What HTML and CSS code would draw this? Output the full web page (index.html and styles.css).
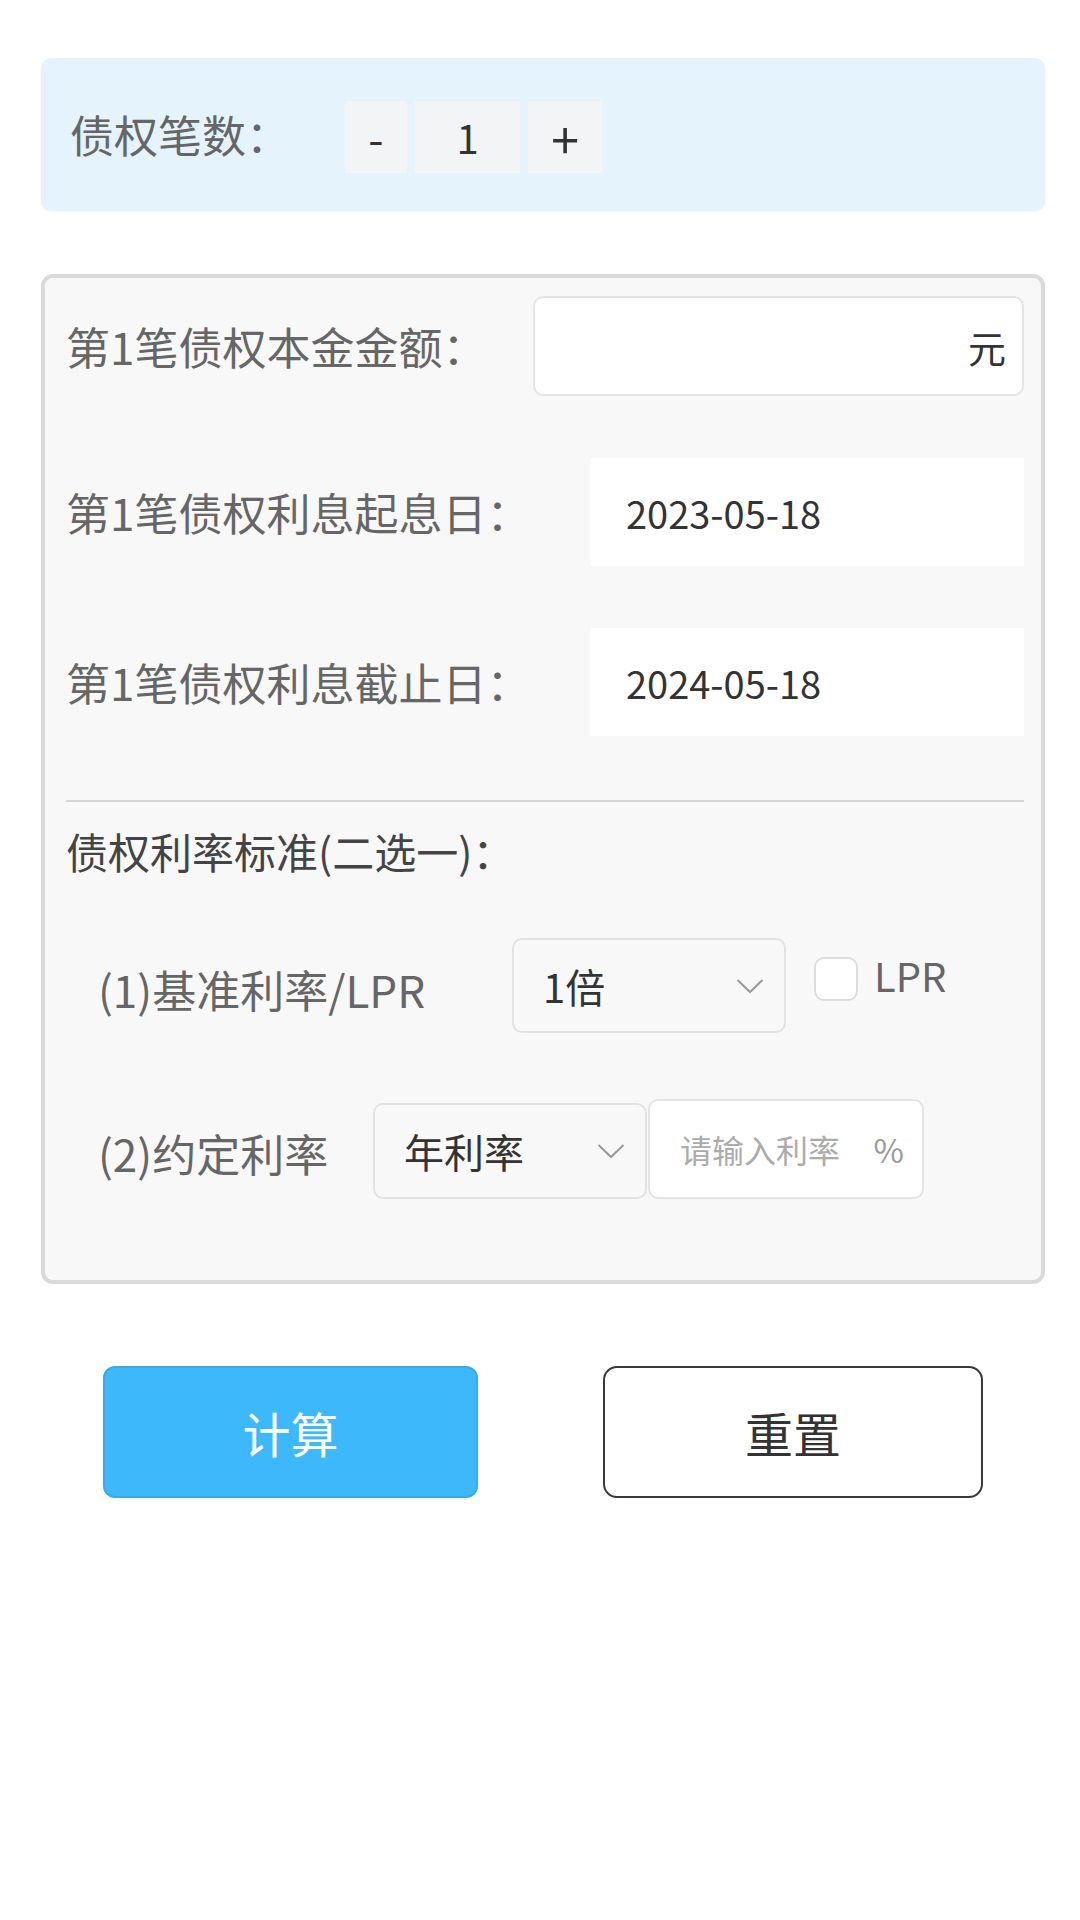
FILE: index.html
```html
<!DOCTYPE html>
<html lang="zh-CN">
<head>
<meta charset="utf-8">
<title>债权利息计算</title>
<link rel="stylesheet" href="styles.css">
</head>
<body>
<div class="page">
  <section class="count-card">
    <span class="count-label">债权笔数：</span>
    <div class="stepper">
      <span class="step-btn step-minus">-</span>
      <span class="step-value">1</span>
      <span class="step-btn step-plus">+</span>
    </div>
  </section>

  <section class="form-card">
    <div class="row row-amount">
      <span class="label">第1笔债权本金金额：</span>
      <div class="amount-box"><span class="unit">元</span></div>
    </div>
    <div class="row row-date">
      <span class="label">第1笔债权利息起息日：</span>
      <div class="date-box">2023-05-18</div>
    </div>
    <div class="row row-date">
      <span class="label">第1笔债权利息截止日：</span>
      <div class="date-box">2024-05-18</div>
    </div>

    <div class="divider"></div>

    <div class="heading">债权利率标准(二选一)：</div>

    <div class="rate-row rate-row-1">
      <span class="rate-label">(1)基准利率/LPR</span>
      <div class="select select-multi">
        <span class="select-text">1倍</span>
        <svg class="chevron" width="28" height="16" viewBox="0 0 28 16"><polyline points="1.5,2 14,14 26.5,2" fill="none" stroke="#9a9a9a" stroke-width="2"/></svg>
      </div>
      <span class="checkbox"></span>
      <span class="check-text">LPR</span>
    </div>

    <div class="rate-row rate-row-2">
      <span class="rate-label">(2)约定利率</span>
      <div class="select select-year">
        <span class="select-text">年利率</span>
        <svg class="chevron" width="28" height="16" viewBox="0 0 28 16"><polyline points="1.5,2 14,14 26.5,2" fill="none" stroke="#9a9a9a" stroke-width="2"/></svg>
      </div>
      <div class="rate-input">
        <span class="placeholder">请输入利率</span>
        <span class="percent">%</span>
      </div>
    </div>
  </section>

  <div class="actions">
    <button class="btn btn-primary">计算</button>
    <button class="btn btn-outline">重置</button>
  </div>
</div>
</body>
</html>
```

FILE: styles.css
```css
* { box-sizing: border-box; }

html, body {
  margin: 0;
  padding: 0;
  background: #ffffff;
}

body {
  width: 1080px;
  height: 1920px;
  font-family: "Noto Sans CJK SC", "Noto Sans", sans-serif;
  color: #333333;
}

.page {
  padding: 58px 35px 0 41px;
}

/* ---------- count card ---------- */
.count-card {
  height: 153px;
  background: #e5f3fd;
  border-radius: 10px;
  box-shadow: 0 1px 3px rgba(0, 0, 0, 0.04);
  display: flex;
  align-items: center;
  padding-left: 29px;
}

.count-label {
  width: 275px;
  font-size: 44px;
  line-height: 1.2;
  color: #666666;
}

.stepper {
  display: flex;
  gap: 8px;
  margin-top: 4px;
}

.step-btn,
.step-value {
  height: 72px;
  background: #f3f4f5;
  display: flex;
  align-items: center;
  justify-content: center;
  color: #333333;
}

.step-minus { width: 62px; font-size: 44px; }
.step-value { width: 105px; font-size: 40px; }
.step-plus  { width: 74px; font-size: 50px; }

/* ---------- form card ---------- */
.form-card {
  margin-top: 63px;
  background: #f8f8f8;
  border: 4px solid #dadada;
  border-radius: 12px;
  padding: 18px 17px 81px 21px;
}

.row {
  display: flex;
  align-items: center;
  justify-content: space-between;
}

.label {
  font-size: 44px;
  line-height: 1.2;
  color: #666666;
}

.amount-box {
  width: 491px;
  height: 100px;
  background: #ffffff;
  border: 2px solid #e4e4e4;
  border-radius: 10px;
  display: flex;
  align-items: center;
  justify-content: flex-end;
  padding-right: 16px;
}

.unit {
  font-size: 38px;
  color: #333333;
}

.row-date {
  margin-top: 62px;
}

.date-box {
  width: 434px;
  height: 108px;
  background: #ffffff;
  display: flex;
  align-items: center;
  padding-left: 36px;
  font-size: 38px;
  color: #333333;
}

.divider {
  margin-top: 64px;
  height: 2px;
  background: #d6d6d6;
}

.heading {
  margin-top: 24px;
  font-size: 42px;
  line-height: 1.2;
  color: #444444;
}

.rate-row {
  display: flex;
  align-items: center;
  padding-left: 32px;
}

.rate-row-1 { margin-top: 62px; }
.rate-row-2 { margin-top: 66px; }

.rate-label {
  font-size: 44px;
  line-height: 1.2;
  color: #666666;
  margin-top: 8px;
}

.rate-row-1 .rate-label { width: 414px; }
.rate-row-2 .rate-label { width: 275px; }

.select {
  width: 274px;
  height: 95px;
  background: #f8f8f8;
  border: 2px solid #e2e2e2;
  border-radius: 10px;
  display: flex;
  align-items: center;
  justify-content: space-between;
  padding: 0 20px 0 29px;
}

.select-text {
  font-size: 40px;
  color: #333333;
}

.chevron {
  display: block;
}

.checkbox {
  align-self: flex-start;
  margin-top: 19px;
  margin-left: 28px;
  width: 44px;
  height: 44px;
  background: #ffffff;
  border: 2px solid #dddddd;
  border-radius: 10px;
}

.check-text {
  align-self: flex-start;
  margin-top: 13px;
  margin-left: 16px;
  font-size: 40px;
  line-height: 1.2;
  color: #666666;
}

.rate-row-2 .select {
  height: 96px;
  margin-top: 4px;
}

.rate-input {
  width: 276px;
  height: 100px;
  margin-left: 1px;
  background: #ffffff;
  border: 2px solid #e4e4e4;
  border-radius: 10px;
  display: flex;
  align-items: center;
  justify-content: space-between;
  padding: 0 18px 0 30px;
}

.placeholder {
  font-size: 32px;
  color: #ababab;
}

.percent {
  font-size: 33px;
  color: #9a9a9a;
}

/* ---------- actions ---------- */
.actions {
  display: flex;
  margin-top: 82px;
  padding-left: 62px;
  gap: 125px;
}

.btn {
  height: 132px;
  border-radius: 12px;
  font-family: "Noto Sans CJK SC", "Noto Sans", sans-serif;
  font-size: 48px;
  display: flex;
  align-items: center;
  justify-content: center;
  padding: 0;
}

.btn-primary {
  width: 375px;
  background: #3db9fb;
  border: 2px solid #35ace8;
  color: #ffffff;
}

.btn-outline {
  width: 380px;
  background: #ffffff;
  border: 2px solid #3a3a3a;
  border-radius: 14px;
  color: #333333;
}
```
